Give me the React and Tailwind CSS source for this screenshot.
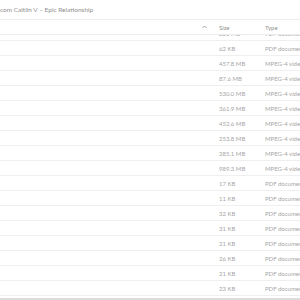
const rows = [
  { size: '231 MB', type: 'PDF document' },
  { size: '62 KB', type: 'PDF document' },
  { size: '457.8 MB', type: 'MPEG-4 video' },
  { size: '87.6 MB', type: 'MPEG-4 video' },
  { size: '530.0 MB', type: 'MPEG-4 video' },
  { size: '361.9 MB', type: 'MPEG-4 video' },
  { size: '452.6 MB', type: 'MPEG-4 video' },
  { size: '253.8 MB', type: 'MPEG-4 video' },
  { size: '285.1 MB', type: 'MPEG-4 video' },
  { size: '989.3 MB', type: 'MPEG-4 video' },
  { size: '17 KB', type: 'PDF document' },
  { size: '11 KB', type: 'PDF document' },
  { size: '32 KB', type: 'PDF document' },
  { size: '31 KB', type: 'PDF document' },
  { size: '21 KB', type: 'PDF document' },
  { size: '26 KB', type: 'PDF document' },
  { size: '21 KB', type: 'PDF document' },
  { size: '23 KB', type: 'PDF document' },
  { size: '19 KB', type: 'PDF document' },
];

const App = () => {
  return (
    <div
      className="w-[300px] h-[300px] bg-white overflow-hidden flex flex-col text-[6px] text-[#a6a6a6]"
      style={{ fontFamily: 'Lato, "Open Sans", sans-serif' }}
    >
      <div className="h-[19px] shrink-0 flex items-center text-[6.5px] text-[#909090] whitespace-nowrap">
        com Caitlin V – Epic Relationship
      </div>

      <div className="h-[16px] shrink-0 flex items-center border-t border-b border-[#ececec] whitespace-nowrap relative z-10 bg-white">
        <div className="w-[207px] shrink-0 flex justify-end">
          <svg width="5" height="4" viewBox="0 0 5 4">
            <path d="M0.5 3 L2.5 1 L4.5 3" stroke="#a0a0a0" strokeWidth="1" fill="none" />
          </svg>
        </div>
        <div className="w-[12px] shrink-0" />
        <div className="w-[46px] shrink-0 text-[#909090]">Size</div>
        <div className="flex-1 text-[#909090]">Type</div>
      </div>

      <div className="flex-1 overflow-hidden">
        <div className="-mt-[9px]">
          {rows.map((row, i) => (
            <div
              key={i}
              className="h-[15px] flex items-center border-b border-[#efefef] whitespace-nowrap"
            >
              <div className="w-[219px] shrink-0" />
              <div className="w-[46px] shrink-0">{row.size}</div>
              <div className="flex-1 overflow-hidden">{row.type}</div>
            </div>
          ))}
        </div>
      </div>

      <div className="h-[2px] shrink-0 bg-[#dcdcdc]" />
    </div>
  );
};

export default App;
